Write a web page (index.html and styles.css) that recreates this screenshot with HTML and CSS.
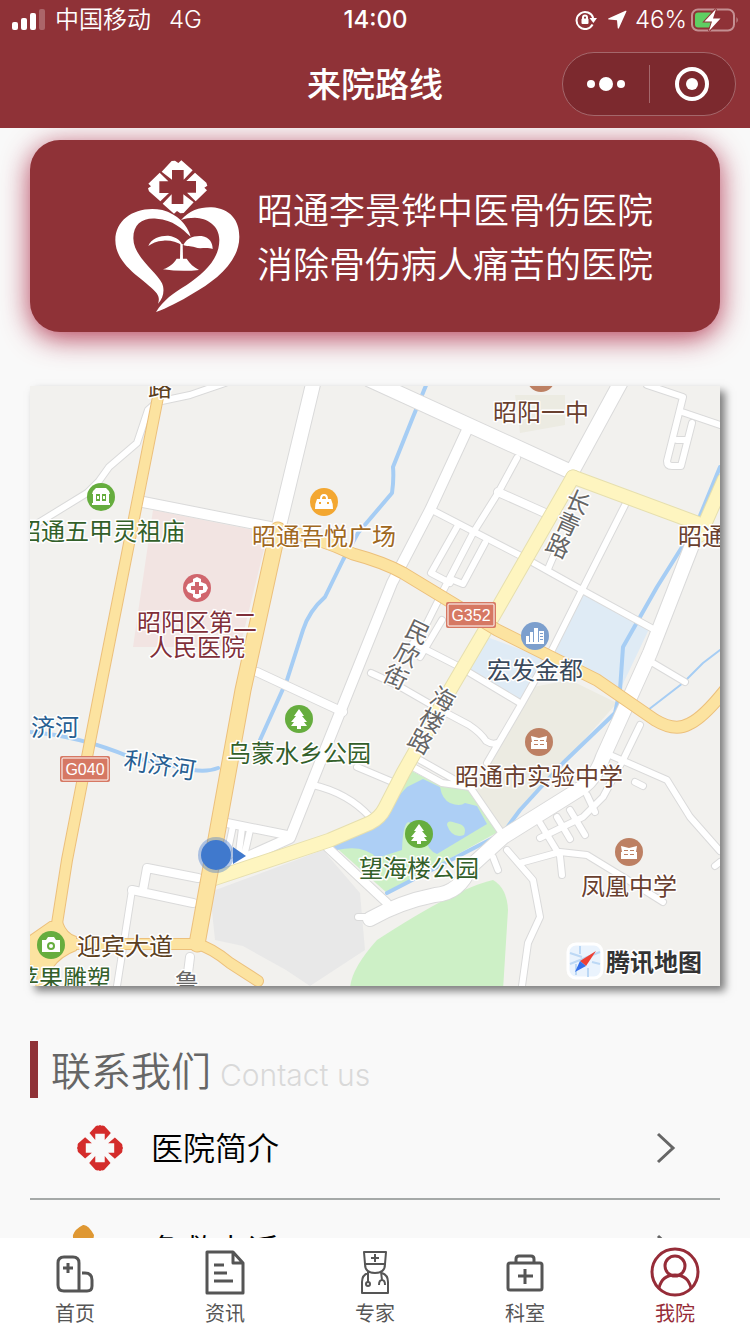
FILE: index.html
```html
<!DOCTYPE html>
<html lang="zh-CN">
<head>
  <meta charset="UTF-8">
  <meta name="viewport" content="width=device-width, initial-scale=1">
  <title>来院路线</title>
  <link rel="stylesheet" href="styles.css">
</head>
<body>
  <header class="header">
    <div class="status">
      <div class="status-left">
        <svg class="signal" viewBox="0 0 34 22">
          <rect x="0" y="13" width="6" height="8" rx="2"/>
          <rect x="9" y="9" width="6" height="12" rx="2"/>
          <rect x="18" y="4" width="6" height="17" rx="2"/>
          <rect x="27" y="0" width="6" height="21" rx="2" opacity=".25"/>
        </svg>
        <span>中国移动</span>
        <span class="network">4G</span>
      </div>
      <div class="status-time">14:00</div>
      <div class="status-right">
        <svg class="lock" viewBox="0 0 22 20">
          <path class="line" d="M17.6 14.5A8.5 8.5 0 1 1 18.2 8"/>
          <path d="M14.5 8H22l-3.6 5z"/>
          <rect x="6.500" y="8.500" width="7" height="5.500" rx="1"/>
          <path class="line thin" d="M8 9V7.500a2 2 0 0 1 4 0V9"/>
        </svg>
        <svg class="arrow" viewBox="0 0 20 20">
          <path d="M18.500.8Q20 .2 19.300 1.800L12 18q-1 1.500-1.300-.2L10 10.200 2 9.500Q0 9.200 1.800 8.300z"/>
        </svg>
        <span class="percent">46%</span>
        <svg class="battery" viewBox="0 0 48 24">
          <rect class="battery-case" x="1" y="1.500" width="42" height="21" rx="6"/>
          <path class="battery-case-fill" d="M45.500 9q2.500 3 0 6z"/>
          <rect class="battery-level" x="4" y="4.500" width="18" height="15" rx="3"/>
          <path class="bolt" d="M25 1 13.500 13.500h7.500L18 23l11.500-12.500H22z"/>
        </svg>
      </div>
    </div>
    <div class="nav">
      <h1>来院路线</h1>
      <div class="capsule">
        <button type="button" aria-label="更多">
          <svg width="38" height="14" viewBox="0 0 38 14">
            <circle cx="4" cy="7" r="4"/><circle cx="19" cy="7" r="7"/><circle cx="34" cy="7" r="4"/>
          </svg>
        </button>
        <button type="button" aria-label="关闭">
          <svg width="34" height="34" viewBox="0 0 34 34">
            <circle class="ring" cx="17" cy="17" r="15"/><circle cx="17" cy="17" r="6"/>
          </svg>
        </button>
      </div>
    </div>
  </header>

  <main class="content">
    <section class="banner">
      <svg class="banner-logo" viewBox="345 90 375 456">
        <g transform="translate(533 171)">
          <path d="M-48-46-18-78l10-1 10 7 9-8 34 30-27 28V-51h-35v29z"/>
          <path d="M-48-46-18-78l10-1 10 7 9-8 34 30-27 28V-51h-35v29z" transform="rotate(180)"/>
          <path d="M-43-52-13-86l9-3 6 9 8-8 33 34-26 26V-55h-35v29z" transform="rotate(90)"/>
          <path d="M-43-52-13-86l9-3 6 9 8-8 33 34-26 26V-55h-35v29z" transform="rotate(-90)"/>
        </g>
        <path d="M572 320C562 284 532 252 487 240 412 226 346 265 346 330c0 80 94 120 124 160 9 13 7 22 4 31 16-15 21-42 12-61-16-35-86-80-86-135 0-45 30-63 70-59 50 4 75 29 102 54z"/>
        <path d="M543 270c27-30 57-39 92-38 55 4 83 38 83 88 0 80-78 135-138 170-40 25-80 45-112 56 22-36 52-56 92-81 50-35 98-75 98-135 0-45-38-66-73-67-17 0-30 2-42 7z"/>
        <path d="M445 348c8-24 40-32 60-31 25 3 40 18 42 29-17-10-37-16-57-14-20 1-35 8-45 16z"/>
        <path d="M550 345c10-20 30-29 55-27 25 4 33 22 33 39-18-7-38 1-53-5-15-5-25-2-35-7z"/>
        <path d="M541 342h7l1 46h-9z"/>
        <path d="M530 386h30c8 14 22 26 37 34q-52 6-108-2c22-8 32-18 41-32z"/>
      </svg>
      <p>昭通李景铧中医骨伤医院<br>消除骨伤病人痛苦的医院</p>
    </section>

    <section class="map">
      <svg viewBox="30 386 690 600" preserveAspectRatio="xMidYMid slice">
        <defs>
          <g id="lanes">
            <path d="M30 528 87 493l12-12 10-14 28-24 11-33 9-8 33-7 35-12"/>
            <path d="M371 673l26 12 40 23 32 17q12 8 17 16 6 4 11 2M413 643l47 24 60 36"/>
            <path d="M517 458 498 493 473 533 445 587 427 623M442 620 420 657"/>
            <path d="M432 510 523 557 582 590 655 630M625 505 582 590 552 650 522 703 487 763"/>
            <path d="M457 527 431 573l19 10M485 543l-22 41-10-4M554 555l-6 14"/>
            <path d="M357 767 395 783M313 785q35 8 57 32M413 767l29 16 28 4M420 760l37 21"/>
            <path d="M470 787 503 835M358 917l15 0 12-8"/>
            <path d="M653 663 685 682M647 385l36 12-16 64q0 5 5 5h9l11-43M682 412l38 13M677 440h9"/>
            <path d="M640 725 623 760 603 797 583 817 540 838M610 755l57 25 23 37 30 34"/>
            <path d="M587 795l8 17M570 810l15 25M557 817l13 22M540 823l20 33 2 19M635 782l8 4"/>
            <path d="M520 863 560 852l27 3 36 22 40 25M507 850l26 30 7 37-12 26-6 43M493 857l5 13"/>
            <path d="M233 826l-5 24M242 828l-3 24M250 830l-5 22"/>
            <path d="M132 890 117 986M720 862l-5 4"/>
          </g>
          <g id="side-streets">
            <path d="M257 672 343 712M498 492l47 21M227 823 287 835M327 847l60 56"/>
            <path d="M198 878 147 868l-4 22M193 903 132 890M190 957l-3 24"/>
          </g>
          <g id="streets">
            <path d="M143 502 270 527"/>
            <path d="M467 430 430 510 392 583 349 690 313 780 290 838 230 865"/>
          </g>
          <g id="avenues">
            <path d="M314 380 278 530M370 380 567 470M622 380 573 470"/>
            <path d="M694 540 650 653 603 757q-7 20-20 30L503 837l-33 30q-10 26-35 28-35 7-65 24"/>
          </g>
          <g id="roads">
            <path d="M573 477 697 523M724 480 700 535"/>
            <path d="M573 477 487 627 450 690 403 773 385 808q-5 10-15 15l-40 17-120 40"/>
          </g>
          <g id="highways">
            <path d="M158 397 102 680 67 860 56 930M60 944h137M46 955l-6 40"/>
            <path d="M197 944q15 4 33 19l28 18"/>
          </g>
          <g id="trunks">
            <path d="M280 530q40 8 73 24 30 8 50 19l94 57 100 50 58 40q20 12 34 4 14-6 37-35"/>
          </g>
          <g id="main-road">
            <path d="M278 530 243 690 197 944"/>
          </g>
        </defs>

        <rect class="ground" x="30" y="386" width="690" height="600"/>
        <path class="hospital" d="M153 510 268 533 240 647H133z"/>
        <path class="district" d="M583 593 650 627 620 690 553 657zM487 637l60 22-25 44-54-33z"/>
        <path class="school" d="M515 395h50v30l-45 8zM533 687l37-7 47 23-60 67-54 60-30-43 16-26z"/>
        <path class="plain" d="M210 892 323 850l37 43 5 57-55 36-24-16-43-24-28-6z"/>
        <path class="meadow" d="M350 990q0-20 27-50 80-52 116-60 14 8 15 30l-5 80z"/>
        <path class="meadow" d="M410 770 443 787l27 2 28 43-111 61-56-50 54-22z"/>
        <path class="lake" d="M407 787 423 779 440 787q2 12 10 16 10 4 15 0l12 3 10 18-50 30q-10-4-11-16l-17-16q-6 0-7 28l-25 8q-14-14-40-8l-17-7 50-17 10-10z"/>
        <path class="meadow" d="M447 825q0-6 9-2 12 2 8 12-12 4-17-10z"/>
        <g class="river">
          <path d="M427 383 413 417 393 467q1 12-1 26L358 533 343 560 325 597q-16 14-22 33L287 680 260 740"/>
          <path d="M30 732q50 4 100 25l63 13q15 2 25-2"/>
          <path d="M720 467 697 523 657 587 623 647 620 690 615 713 563 763 520 810 503 833 387 893"/>
          <path class="brook" d="M720 650 703 663 683 683 648 710"/>
        </g>

        <g class="casing">
          <use href="#lanes" stroke-width="8"/>
          <use href="#side-streets" stroke-width="10"/>
          <use href="#streets" stroke-width="12"/>
          <use href="#avenues" stroke-width="16"/>
        </g>
        <g class="surface">
          <use href="#lanes" stroke-width="6"/>
          <use href="#side-streets" stroke-width="8"/>
          <use href="#streets" stroke-width="10"/>
          <use href="#avenues" stroke-width="14"/>
        </g>
        <use class="road-casing" href="#roads" stroke-width="15"/>
        <use class="road-surface" href="#roads" stroke-width="13"/>
        <g class="highway-casing">
          <use href="#highways" stroke-width="12"/>
          <use href="#trunks" stroke-width="13"/>
          <use href="#main-road" stroke-width="17"/>
          <path d="M50 922 62 922q4 12 14 15v13q-16 6-24 18-14 8-22-4v-28z"/>
        </g>
        <g class="highway-surface">
          <use href="#highways" stroke-width="10"/>
          <use href="#trunks" stroke-width="11"/>
          <use href="#main-road" stroke-width="15"/>
          <path d="M50 922 62 922q4 12 14 15v13q-16 6-24 18-14 8-22-4v-28z"/>
        </g>

        <!-- place markers -->
        <g transform="translate(101 497)">
          <circle class="green" r="14"/>
          <path class="glyph" d="M-8-6-5-9H5l3 3 1 3H8V6h1v2H-9V6h1v-9h-1z"/>
          <path class="green" d="M-5-3h4v7h-4zM1-3h4v7H1z"/>
          <path class="glyph" d="M-4-1h2v3h-2zM2-1h2v3H2z"/>
        </g>
        <g transform="translate(324 502)">
          <circle class="amber" r="14"/>
          <path class="glyph" d="M-7-3h3q0-5 4-5t4 5h3q2 4 2 10H-9q0-6 2-10z"/>
          <path class="amber" d="M-2-3q0-3 2-3t2 3zM-5 0h2v2h-2zM3 0h2v2H3z"/>
        </g>
        <g transform="translate(197 588)">
          <circle class="rose" r="14"/>
          <path class="glyph" d="m-4-9 4-2 4 2v3l5 2 2 4-2 4-5 2v3l-4 2-4-2V6l-5-2-2-4 2-4 5-2z"/>
          <path class="rose" d="M-2-6h4v4h4v4H2v4h-4V2h-4v-4h4z"/>
        </g>
        <g transform="translate(299 719)">
          <circle class="green" r="14"/>
          <path class="glyph" d="m0-10 5 7H3l5 6H5l3 4H2v3h-4V7h-6l3-4h-3l5-6h-2z"/>
        </g>
        <g transform="translate(419 834)">
          <circle class="green" r="14"/>
          <path class="glyph" d="m0-10 5 7H3l5 6H5l3 4H2v3h-4V7h-6l3-4h-3l5-6h-2z"/>
        </g>
        <g transform="translate(535 636)">
          <circle class="blue" r="14"/>
          <path class="glyph" d="M-9 6V0h3v6zM-5 6V-4h3V6zM-1 6V-8h4V6zM4 6V-5h5V6zM-9 6H9v2H-9z"/>
          <path class="blue" d="M5-3h3v1H5zM5 0h3v1H5zM5 3h3v1H5z"/>
        </g>
        <g transform="translate(539 742)">
          <circle class="brown" r="14"/>
          <path class="glyph" d="m-8-6 8 2 8-2-1 6H8v7H-8V0h1z"/>
          <path class="brown" d="M-5-2h4v1h-4zM1-2h4v1H1zM-5 2h4v1h-4zM1 2h4v1H1z"/>
        </g>
        <g transform="translate(629 852)">
          <circle class="brown" r="14"/>
          <path class="glyph" d="m-8-6 8 2 8-2-1 6H8v7H-8V0h1z"/>
          <path class="brown" d="M-5-2h4v1h-4zM1-2h4v1H1zM-5 2h4v1h-4zM1 2h4v1H1z"/>
        </g>
        <circle class="brown" cx="541" cy="378" r="14"/>
        <g transform="translate(51 945)">
          <circle class="green" r="14"/>
          <path class="glyph" d="M-9-5h4l2-3h6l2 3h4V7H-9z"/>
          <circle class="green" cy="1" r="4"/>
          <circle class="glyph" cy="1" r="2"/>
        </g>

        <!-- road numbers -->
        <g class="shield" transform="translate(446 602)">
          <rect width="50" height="26" rx="2"/><rect class="shield-line" x="2" y="2" width="46" height="22" rx="1"/>
          <text x="25" y="19">G352</text>
        </g>
        <g class="shield" transform="translate(60 756)">
          <rect width="50" height="26" rx="2"/><rect class="shield-line" x="2" y="2" width="46" height="22" rx="1"/>
          <text x="25" y="19">G040</text>
        </g>

        <g class="labels">
          <text class="t-road" x="148" y="396">路</text>
          <text class="t-green" x="17" y="540">昭通五甲灵祖庙</text>
          <text class="t-amber" x="252" y="545">昭通吾悦广场</text>
          <text class="t-rose" x="137" y="631">昭阳区第二</text>
          <text class="t-rose" x="149" y="656">人民医院</text>
          <text class="t-brown" x="493" y="421">昭阳一中</text>
          <text class="t-brown" x="678" y="545">昭通</text>
          <text class="t-blue" x="487" y="679">宏发金都</text>
          <text class="t-green" x="227" y="762">乌蒙水乡公园</text>
          <text class="t-brown" x="455" y="785">昭通市实验中学</text>
          <text class="t-green" x="359" y="877">望海楼公园</text>
          <text class="t-brown" x="581" y="895">凤凰中学</text>
          <text class="t-road" x="77" y="955">迎宾大道</text>
          <text class="t-green" x="15" y="987">苹果雕塑</text>
          <text class="t-river" x="31" y="736">济河</text>
          <text class="t-river" transform="translate(123 768) rotate(9)">利济河</text>
          <text class="t-street" x="175" y="991">鲁</text>
          <text class="t-street" transform="translate(578 502) rotate(24)" x="-12 -12 -12" y="9 33 57">长青路</text>
          <text class="t-street" transform="translate(418 632) rotate(26)" x="-12 -12 -12" y="9 34 59">民欣街</text>
          <text class="t-street" transform="translate(443 699) rotate(28)" x="-12 -12 -12" y="9 33 57">海楼路</text>
        </g>

        <!-- current position -->
        <path class="here" d="m233 847 13 9-13 8z"/>
        <circle class="here-glow" cx="216" cy="855" r="18"/>
        <circle class="here" cx="216" cy="855" r="15"/>

        <g transform="translate(568 944)">
          <rect class="brand-tile" width="34" height="34" rx="8"/>
          <path class="brand-grid" d="M2 20 32 8M2 9l12 4M12 2v8M24 18l8 2M20 24v9M8 20v11"/>
          <path class="needle-red" d="m28 7-16 10 6 5z"/>
          <path class="needle-blue" d="m7 28 5-11 6 5z"/>
        </g>
        <text class="brand-name" x="606" y="971">腾讯地图</text>
      </svg>
    </section>

    <section class="contact">
      <h2>联系我们 <small>Contact us</small></h2>
      <a class="row" href="#intro">
        <svg class="row-icon" viewBox="-68 -68 136 136">
          <g class="cross">
            <path d="M-31-44-12-65q4-2 7-1l5-2 5 2q4-1 8 1l19 21-18 20V-42h-28v18z"/>
            <path d="M-31-44-12-65q4-2 7-1l5-2 5 2q4-1 8 1l19 21-18 20V-42h-28v18z" transform="rotate(90)"/>
            <path d="M-31-44-12-65q4-2 7-1l5-2 5 2q4-1 8 1l19 21-18 20V-42h-28v18z" transform="rotate(180)"/>
            <path d="M-31-44-12-65q4-2 7-1l5-2 5 2q4-1 8 1l19 21-18 20V-42h-28v18z" transform="rotate(270)"/>
          </g>
        </svg>
        <span>医院简介</span>
        <svg class="chevron" viewBox="0 0 20 32"><path d="M2 2l15 14L2 30"/></svg>
      </a>
      <a class="row" href="tel:08702222120">
        <svg class="row-icon" viewBox="0 0 46 46">
          <path class="phone" d="M6-2q5-1 11 10l-1 7q-3 2-2 4 4 8 11 12 2 1 5-2l7-2q9 6 8 10-6 7-13 7Q20 43 8 31-5 16-4 8-2 2 6-2z"/>
        </svg>
        <span>急救电话：0870-2222120</span>
        <svg class="chevron" viewBox="0 0 20 32"><path d="M2 2l15 14L2 30"/></svg>
      </a>
    </section>
  </main>

  <nav class="tabbar">
    <a href="#home">
      <svg viewBox="0 0 50 50">
        <path d="M14 10h9q6 0 6 6v28H14q-6 0-6-6V16q0-6 6-6zM32 26h3q7 0 7 7v6q0 5-5 5h-8"/>
        <path d="M18 16v10M13 21h10"/>
      </svg>
      <span>首页</span>
    </a>
    <a href="#news">
      <svg viewBox="0 0 50 50">
        <path d="M7 5h26l10 11v30H7zM33 5v11h10M14 18h10M14 26h13M14 34h19"/>
      </svg>
      <span>资讯</span>
    </a>
    <a href="#experts">
      <svg class="thin-icon" viewBox="0 0 50 50">
        <path d="M14 5h22l-1 12q0 9-10 9t-10-9zM14 17h22M25 7v8M21 11h8"/>
        <path d="M18 26q-6 2-6 9v11h26V35q0-7-6-9M18 25v10M31 25l1 8M29 38q0-5 3-5t3 5"/>
        <circle cx="18" cy="37" r="2"/>
      </svg>
      <span>专家</span>
    </a>
    <a href="#departments">
      <svg viewBox="0 0 50 50">
        <rect x="8" y="16" width="34" height="27" rx="2"/>
        <path d="M16 16v-4q0-3 3-3h12q3 0 3 3v4M25 22v15M18 29h15"/>
      </svg>
      <span>科室</span>
    </a>
    <a class="active" href="#hospital">
      <svg viewBox="0 0 50 50">
        <circle cx="25" cy="25" r="23"/><circle cx="25" cy="19" r="10"/>
        <path d="M9 41q3-13 16-13t16 13"/>
      </svg>
      <span>我院</span>
    </a>
  </nav>
</body>
</html>
```
FILE: styles.css
```css
* {
  box-sizing: border-box;
}

body {
  margin: 0;
  height: 100vh;
  display: flex;
  flex-direction: column;
  font-family: "Noto Sans CJK SC", sans-serif;
  font-weight: 350;
  background-color: #f9f9f9;
}

a {
  color: inherit;
  text-decoration: none;
}

/* header */
.header {
  flex: none;
  color: #fff;
  background-color: #8f3237;
}

.header svg {
  fill: #fff;
}

.status {
  height: 40px;
  padding: 0 11px 0 12px;
  display: grid;
  grid-template-columns: 1fr auto 1fr;
  align-items: center;
  font-family: Inter, "Noto Sans CJK SC", sans-serif;
  font-size: 24px;
  line-height: 40px;
}

.status-left,
.status-right {
  display: flex;
  align-items: center;
}

.status-right {
  justify-content: flex-end;
}

.status-time {
  font-weight: 500;
}

.signal {
  width: 34px;
  height: 22px;
  margin-right: 9px;
}

.network {
  margin-left: 18px;
}

.lock {
  width: 22px;
  height: 20px;
  margin-right: 10px;
}

.lock .line {
  fill: none;
  stroke: #fff;
  stroke-width: 2;
}

.arrow {
  width: 20px;
  height: 20px;
  margin-right: 8px;
}

.percent {
  margin-right: 4px;
}

.battery {
  width: 48px;
  height: 24px;
}

.header .battery-case {
  fill: none;
  stroke: #c48f92;
  stroke-width: 2;
}

.header .battery-case-fill {
  fill: #c48f92;
}

.header .battery-level {
  fill: #5fce62;
}

.bolt {
  stroke: #8f3237;
  stroke-width: 2;
  paint-order: stroke;
}

.nav {
  position: relative;
  height: 88px;
  padding-bottom: 4px;
  display: flex;
  align-items: center;
  justify-content: center;
}

h1 {
  margin: 0;
  font-size: 34px;
  font-weight: 500;
}

.capsule {
  position: absolute;
  right: 14px;
  top: 12px;
  width: 174px;
  height: 64px;
  display: flex;
  align-items: center;
  border: 1px solid #a4676b;
  border-radius: 32px;
  background-color: #7c292e;
}

.capsule button {
  flex: 1;
  height: 38px;
  padding: 0;
  display: flex;
  align-items: center;
  justify-content: center;
  border: none;
  background: none;
}

.capsule button:last-child {
  border-left: 1px solid #a4676b;
}

.capsule .ring {
  fill: none;
  stroke: #fff;
  stroke-width: 4;
}

/* content */
.content {
  flex: 1;
  min-height: 0;
  padding: 12px 30px 0;
  overflow-y: auto;
  scrollbar-width: none;
}

.banner {
  height: 192px;
  padding-left: 85px;
  display: flex;
  align-items: center;
  gap: 17px;
  color: #fff;
  border-radius: 30px;
  background-color: #8f3237;
  box-shadow: 0 6px 28px rgba(164, 16, 48, 0.8);
}

.banner-logo {
  flex: none;
  width: 125px;
  height: 152px;
  fill: #fff;
}

.banner p {
  margin: 0;
  padding-bottom: 2px;
  font-size: 36px;
  line-height: 54px;
  white-space: nowrap;
}

.map {
  height: 600px;
  margin-top: 54px;
  box-shadow: 5px 5px 8px rgba(0, 0, 0, 0.5);
}

.map svg {
  display: block;
  width: 100%;
  height: 100%;
}

.casing,
.surface,
.road-casing,
.road-surface,
.highway-casing,
.highway-surface,
.river {
  fill: none;
  stroke-linecap: round;
  stroke-linejoin: round;
}

.ground { fill: #f2f1ee; }
.hospital { fill: #f2e4e2; }
.district { fill: #dfebf5; }
.school { fill: #ecebe2; }
.plain { fill: #e8e8e8; }
.meadow { fill: #cdf0c6; }
.lake { fill: #adcff5; }

.river {
  stroke: #a6cdf4;
  stroke-width: 4;
}

.river .brook {
  stroke-width: 2;
}

.casing { stroke: #dadada; }
.surface { stroke: #fff; }
.road-casing { stroke: #e6dfae; }
.road-surface { stroke: #fef5c0; }

.highway-casing {
  stroke: #ecc07c;
}

.highway-surface {
  stroke: #fce3a0;
}

.highway-casing > path {
  stroke-width: 2;
}

.highway-surface > path {
  fill: #fce3a0;
  stroke: none;
}

.glyph { fill: #fff; }
.green { fill: #66ad3e; }
.amber { fill: #f3a731; }
.rose { fill: #d0666d; }
.blue { fill: #7c9fcd; }
.brown { fill: #bd8063; }

.shield rect {
  fill: #d67863;
}

.shield .shield-line {
  fill: none;
  stroke: #fff;
  stroke-width: 1;
}

.shield text {
  font-family: "Liberation Sans", sans-serif;
  font-size: 16px;
  font-weight: 400;
  text-anchor: middle;
  fill: #fff;
}

.labels text,
.brand-name {
  font-size: 24px;
  font-weight: 400;
  stroke: #fff;
  stroke-width: 3;
  stroke-linejoin: round;
  paint-order: stroke;
}

.t-green { fill: #33602a; }
.t-amber { fill: #9f681f; }
.t-rose { fill: #7f2f39; }
.t-brown { fill: #69402f; }
.t-blue { fill: #3b4a5c; }
.t-road { fill: #5c4020; }
.t-river { fill: #285f92; }
.t-street { fill: #666; }

.here { fill: #4079cd; }

.here-glow {
  fill: #4079cd;
  opacity: 0.4;
}

.brand-tile {
  fill: #eaf3fd;
  stroke: #fff;
  stroke-width: 3;
}

.brand-grid {
  fill: none;
  stroke: #bcd8f5;
  stroke-width: 2;
}

.needle-red { fill: #ee4135; }
.needle-blue { fill: #3570ea; }

.map .brand-name {
  font-weight: 700;
  fill: #333;
}

/* contact */
.contact {
  margin-top: 55px;
}

h2 {
  height: 57px;
  margin: 0;
  padding-left: 13px;
  border-left: 8px solid #8f3237;
  color: #666;
  font-size: 40px;
  font-weight: 350;
  line-height: 56px;
}

h2 small {
  color: #d9d9d9;
  font-family: Inter, sans-serif;
  font-size: 30px;
  font-weight: 300;
  line-height: 32px;
}

.row {
  height: 102px;
  padding: 0 44px 0 47px;
  display: flex;
  align-items: center;
  border-bottom: 2px solid #a5a9a8;
  color: #000;
  font-size: 32px;
  line-height: 48px;
}

.row span {
  flex: 1;
  margin-left: 28px;
  padding-bottom: 4px;
}

.row-icon {
  width: 46px;
  height: 46px;
  overflow: visible;
}

.cross { fill: #d42c2b; }
.phone { fill: #df9833; }

.chevron {
  width: 20px;
  height: 32px;
  fill: none;
  stroke: #666;
  stroke-width: 3;
}

/* bottom tabs */
.tabbar {
  flex: none;
  height: 96px;
  display: flex;
  background-color: #fff;
}

.tabbar a {
  flex: 1;
  padding-top: 9px;
  display: flex;
  flex-direction: column;
  align-items: center;
  color: #555;
  font-size: 20px;
  font-weight: 400;
  line-height: 32px;
}

.tabbar svg {
  width: 50px;
  height: 50px;
  fill: none;
  stroke: currentColor;
  stroke-width: 3;
  stroke-linejoin: round;
}

.tabbar .thin-icon {
  stroke-width: 2;
}

.tabbar .active {
  color: #962c38;
}
```
